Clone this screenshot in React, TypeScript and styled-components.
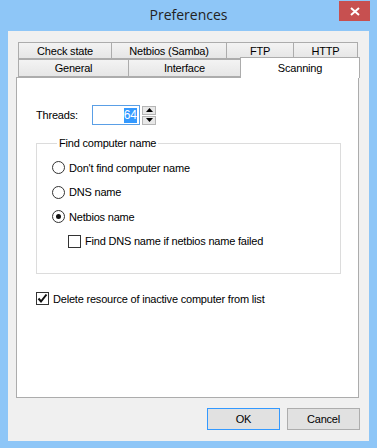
import styled, { createGlobalStyle } from "styled-components";

const GlobalStyle = createGlobalStyle`
    html, body {
        margin: 0;
        padding: 0;
        background: #8ec6f7;
    }
    * {
        box-sizing: border-box;
    }
`;

const Frame = styled.div`
    width: 377px;
    height: 448px;
    background: #8ec6f7;
    display: flex;
    flex-direction: column;
    font-family: "Liberation Sans", Arial, sans-serif;
    font-size: 11px;
    letter-spacing: -0.2px;
    color: #000;
`;

const TitleBar = styled.div`
    height: 31px;
    display: grid;
    grid-template-columns: 1fr auto 1fr;
    align-items: start;
`;

const Title = styled.div`
    grid-column: 2;
    font-family: "Open Sans", "Noto Sans", sans-serif;
    font-size: 14px;
    letter-spacing: 0;
    color: #222;
    line-height: 30px;
`;

const CloseButton = styled.div`
    grid-column: 3;
    justify-self: end;
    margin: 1px 7px 0 0;
    width: 31px;
    height: 20px;
    background: #c75050;
    display: flex;
    align-items: center;
    justify-content: center;
`;

const Client = styled.div`
    margin: 0 8px;
    height: 410px;
    background: #f0f0f0;
    padding: 11px 9px 11px 8px;
    display: flex;
    flex-direction: column;
`;

const TabStrip = styled.div`
    width: 343px;
    display: flex;
    flex-direction: column;
`;

const TabRow = styled.div<{ $h: number }>`
    display: flex;
    padding-left: 2px;
    height: ${(p) => p.$h}px;
    align-items: flex-end;
`;

const Tab = styled.div<{ $w: number; $active?: boolean }>`
    width: ${(p) => p.$w}px;
    height: ${(p) => (p.$active ? "21px" : "100%")};
    margin-right: -1px;
    margin-bottom: ${(p) => (p.$active ? "-1px" : "0")};
    position: relative;
    z-index: ${(p) => (p.$active ? 2 : 1)};
    border: 1px solid #acacac;
    border-bottom: ${(p) => (p.$active ? "none" : "1px solid #acacac")};
    background: ${(p) => (p.$active ? "#fff" : "linear-gradient(#f3f3f3, #e6e6e6)")};
    display: flex;
    justify-content: center;
    align-items: ${(p) => (p.$active ? "flex-start" : "center")};
    padding-top: ${(p) => (p.$active ? "4px" : "0")};
    white-space: nowrap;
`;

const Panel = styled.div`
    width: 343px;
    height: 321px;
    background: #fff;
    border: 1px solid #acacac;
    padding: 27px 0 0 19px;
    display: flex;
    flex-direction: column;
`;

const ThreadsRow = styled.div`
    display: flex;
    align-items: center;
    height: 20px;
`;

const Label = styled.span`
    width: 56px;
`;

const NumberBox = styled.div`
    width: 48px;
    height: 20px;
    border: 1px solid #5a9fe6;
    display: flex;
    align-items: center;
    justify-content: flex-end;
    padding-right: 2px;
`;

const Selected = styled.span`
    background: #3399ff;
    color: #fff;
    font-size: 12px;
    letter-spacing: 0;
    line-height: 15px;
`;

const Spinner = styled.div`
    margin-left: 2px;
    display: flex;
    flex-direction: column;
    gap: 1px;
`;

const SpinButton = styled.div`
    width: 14px;
    height: 9px;
    border: 1px solid #b5b5b5;
    background: #e8e8e8;
    display: flex;
    align-items: center;
    justify-content: center;
`;

const Group = styled.fieldset`
    margin: 12px 0 0 0;
    width: 305px;
    height: 137px;
    border: 1px solid #dcdcdc;
    padding: 12px 0 0 15px;
    display: flex;
    flex-direction: column;
    gap: 11.5px;
`;

const Legend = styled.legend`
    margin-left: 5px;
    padding: 0 2px;
`;

const Option = styled.label<{ $indent?: number }>`
    display: flex;
    align-items: center;
    gap: 4px;
    height: 13px;
    margin-left: ${(p) => p.$indent ?? 0}px;
`;

const Radio = styled.span<{ $on?: boolean }>`
    width: 13px;
    height: 13px;
    border-radius: 50%;
    border: 1px solid #333;
    background: #fff;
    display: flex;
    align-items: center;
    justify-content: center;
    &::after {
        content: "";
        width: 5px;
        height: 5px;
        border-radius: 50%;
        background: ${(p) => (p.$on ? "#111" : "transparent")};
    }
`;

const Check = styled.span`
    width: 13px;
    height: 13px;
    border: 1px solid #333;
    background: #fff;
    display: flex;
    align-items: center;
    justify-content: center;
`;

const DeleteRow = styled(Option)`
    margin-top: 18px;
`;

const Buttons = styled.div`
    margin-top: 10px;
    display: flex;
    justify-content: flex-end;
    gap: 7px;
`;

const Button = styled.div<{ $default?: boolean }>`
    width: 73px;
    height: 22px;
    border: 1px solid ${(p) => (p.$default ? "#3399ff" : "#adadad")};
    background: #e1e1e1;
    display: flex;
    align-items: center;
    justify-content: center;
`;

const Tick = () => (
    <svg width="11" height="11" viewBox="0 0 11 11">
        <path d="M1.5 5.5 L4 8.5 L9.5 1.5" fill="none" stroke="#111" strokeWidth="2" />
    </svg>
);

const App = () => {
    return (
        <>
            <GlobalStyle />
            <Frame>
                <TitleBar>
                    <Title>Preferences</Title>
                    <CloseButton>
                        <svg width="10" height="9" viewBox="0 0 10 9">
                            <path d="M1 1 L9 8 M9 1 L1 8" stroke="#fff" strokeWidth="2" />
                        </svg>
                    </CloseButton>
                </TitleBar>
                <Client>
                    <TabStrip>
                        <TabRow $h={17}>
                            <Tab $w={94}>Check state</Tab>
                            <Tab $w={116}>Netbios (Samba)</Tab>
                            <Tab $w={68}>FTP</Tab>
                            <Tab $w={65}>HTTP</Tab>
                        </TabRow>
                        <TabRow $h={18}>
                            <Tab $w={111}>General</Tab>
                            <Tab $w={113}>Interface</Tab>
                            <Tab $w={120} $active>Scanning</Tab>
                        </TabRow>
                    </TabStrip>
                    <Panel>
                        <ThreadsRow>
                            <Label>Threads:</Label>
                            <NumberBox>
                                <Selected>64</Selected>
                            </NumberBox>
                            <Spinner>
                                <SpinButton>
                                    <svg width="7" height="4" viewBox="0 0 7 4"><path d="M0 4 L3.5 0 L7 4Z" fill="#000" /></svg>
                                </SpinButton>
                                <SpinButton>
                                    <svg width="7" height="4" viewBox="0 0 7 4"><path d="M0 0 L3.5 4 L7 0Z" fill="#000" /></svg>
                                </SpinButton>
                            </Spinner>
                        </ThreadsRow>
                        <Group>
                            <Legend>Find computer name</Legend>
                            <Option><Radio />Don't find computer name</Option>
                            <Option><Radio />DNS name</Option>
                            <Option><Radio $on />Netbios name</Option>
                            <Option $indent={16}><Check />Find DNS name if netbios name failed</Option>
                        </Group>
                        <DeleteRow><Check><Tick /></Check>Delete resource of inactive computer from list</DeleteRow>
                    </Panel>
                    <Buttons>
                        <Button $default>OK</Button>
                        <Button>Cancel</Button>
                    </Buttons>
                </Client>
            </Frame>
        </>
    );
};

export default App;
